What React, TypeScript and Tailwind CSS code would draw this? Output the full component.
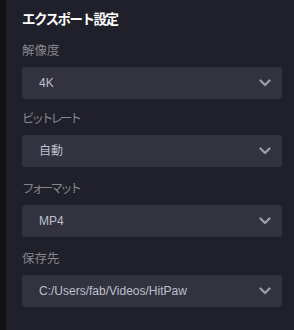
const fields = [
  { label: '解像度', value: '4K', mt: 'mt-[11px]', kana: false },
  { label: 'ビットレート', value: '自動', mt: 'mt-[10px]', kana: true },
  { label: 'フォーマット', value: 'MP4', mt: 'mt-[12px]', kana: true },
  { label: '保存先', value: 'C:/Users/fab/Videos/HitPaw', mt: 'mt-[12px]', kana: false },
];

function Chevron() {
  return (
    <svg width="12" height="8" viewBox="0 0 12 8" fill="none">
      <path d="M1.5 1.5 L6 6 L10.5 1.5" stroke="#9b9ba8" strokeWidth="2.4" strokeLinecap="round" strokeLinejoin="round" />
    </svg>
  );
}

export default function App() {
  return (
    <div className="flex h-[330px] w-[294px] bg-[#1f2029] font-['Liberation_Sans','Noto_Sans_CJK_JP',sans-serif]">
      <div className="w-[6px] shrink-0 bg-[#111114]" />
      <div className="flex flex-1 flex-col pl-4 pr-3 pt-[10px]">
        <h2 className="text-[13.5px] font-bold leading-5 -tracking-[1.5px] text-white">エクスポート設定</h2>
        {fields.map((f) => (
          <div key={f.label} className={f.mt}>
            <div className={f.kana ? 'text-[12.5px] leading-5 -tracking-[3px] text-[#85858d]' : 'text-[12.5px] leading-5 text-[#85858d]'}>
              {f.label}
            </div>
            <button className="mt-[6px] flex h-8 w-full items-center justify-between rounded-[3px] bg-[#32333f] pl-[17px] pr-[11px]">
              <span className="text-[12px] text-[#bcc0cc]">{f.value}</span>
              <Chevron />
            </button>
          </div>
        ))}
      </div>
    </div>
  );
}
